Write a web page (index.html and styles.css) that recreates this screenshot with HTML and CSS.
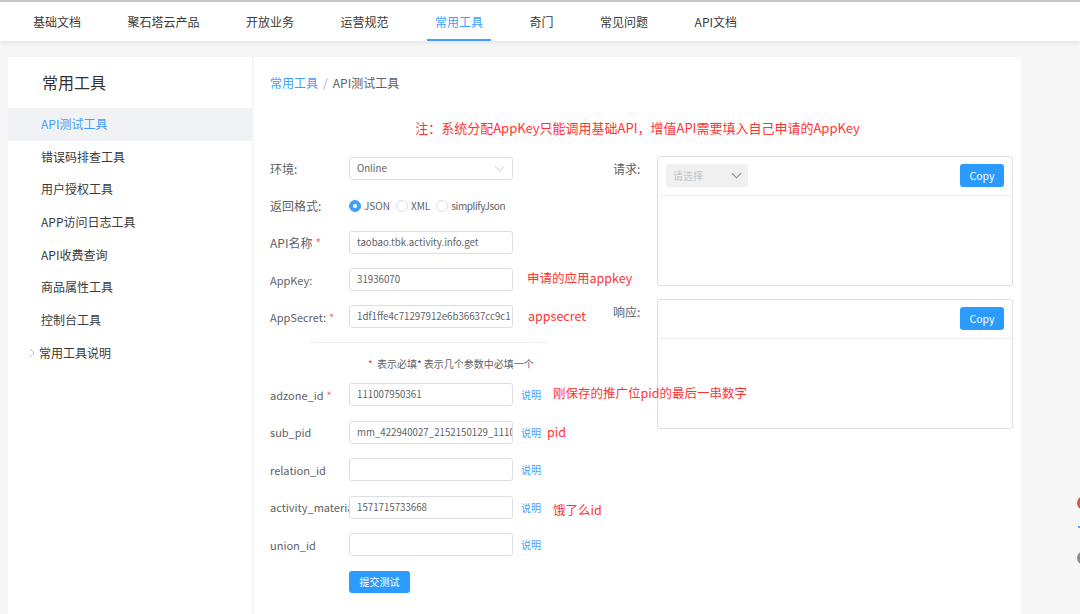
FILE: index.html
```html
<!DOCTYPE html>
<html lang="zh-CN">
<head>
<meta charset="utf-8">
<title>API测试工具</title>
<link rel="stylesheet" href="styles.css">
</head>
<body>
<nav class="topnav">
  <a href="#">基础文档</a>
  <a href="#">聚石塔云产品</a>
  <a href="#">开放业务</a>
  <a href="#">运营规范</a>
  <a href="#" class="active">常用工具</a>
  <a href="#">奇门</a>
  <a href="#">常见问题</a>
  <a href="#">API文档</a>
</nav>
<div class="page">
  <aside class="sidebar">
    <div class="side-title">常用工具</div>
    <ul class="side-menu">
      <li class="active">API测试工具</li>
      <li>错误码排查工具</li>
      <li>用户授权工具</li>
      <li>APP访问日志工具</li>
      <li>API收费查询</li>
      <li>商品属性工具</li>
      <li>控制台工具</li>
      <li class="sub"><svg class="sub-arrow" viewBox="0 0 6 10" width="6" height="10"><polyline points="1,1 5,5 1,9" fill="none" stroke="#b5b8be" stroke-width="1"/></svg>常用工具说明</li>
    </ul>
  </aside>
  <main class="main">
    <div class="crumb"><span class="crumb-link">常用工具</span><span class="crumb-sep">/</span><span class="crumb-cur">API测试工具</span></div>
    <p class="notice">注：系统分配AppKey只能调用基础API，增值API需要填入自己申请的AppKey</p>
    <div class="form-wrap">
      <div class="left-col">
        <div class="row">
          <label class="lbl">环境:</label>
          <div class="inp select">Online<svg class="chev" viewBox="0 0 12 7" width="11" height="7"><polyline points="1,1 6,6 11,1" fill="none" stroke="#c0c4cc" stroke-width="1"/></svg></div>
        </div>
        <div class="row">
          <label class="lbl">返回格式:</label>
          <div class="radios">
            <span class="radio checked"></span><span class="rtext">JSON</span>
            <span class="radio"></span><span class="rtext">XML</span>
            <span class="radio"></span><span class="rtext narrow">simplifyJson</span>
          </div>
        </div>
        <div class="row">
          <label class="lbl">API名称<span class="req">*</span></label>
          <div class="inp">taobao.tbk.activity.info.get</div>
        </div>
        <div class="row">
          <label class="lbl en">AppKey:</label>
          <div class="inp">31936070</div>
          <span class="anno a-appkey">申请的应用appkey</span>
        </div>
        <div class="row tight">
          <label class="lbl en">AppSecret:<span class="req">*</span></label>
          <div class="inp">1df1ffe4c71297912e6b36637cc9c1</div>
          <span class="anno a-secret">appsecret</span>
        </div>
        <div class="divider"></div>
        <p class="legend"><span class="req-red">*</span> 表示必填<span class="req-blue">*</span> 表示几个参数中必填一个</p>
        <div class="row low">
          <label class="lbl en">adzone_id<span class="req">*</span></label>
          <div class="inp">111007950361</div>
          <a class="help" href="#">说明</a>
          <span class="anno a-adzone">刚保存的推广位pid的最后一串数字</span>
        </div>
        <div class="row low">
          <label class="lbl en">sub_pid</label>
          <div class="inp">mm_422940027_2152150129_111007950361</div>
          <a class="help" href="#">说明</a>
          <span class="anno a-pid">pid</span>
        </div>
        <div class="row low">
          <label class="lbl en">relation_id</label>
          <div class="inp"></div>
          <a class="help" href="#">说明</a>
        </div>
        <div class="row low">
          <label class="lbl en">activity_material_id</label>
          <div class="inp">1571715733668</div>
          <a class="help" href="#">说明</a>
          <span class="anno a-ele">饿了么id</span>
        </div>
        <div class="row low">
          <label class="lbl en">union_id</label>
          <div class="inp"></div>
          <a class="help" href="#">说明</a>
        </div>
        <button class="submit">提交测试</button>
      </div>
      <div class="right-col">
        <div class="panel">
          <span class="plabel">请求:</span>
          <div class="pbox">
            <div class="phead">
              <div class="psel">请选择<svg class="chev2" viewBox="0 0 12 7" width="11" height="7"><polyline points="1,1 6,6 11,1" fill="none" stroke="#8a8d93" stroke-width="1.2"/></svg></div>
              <button class="copy">Copy</button>
            </div>
          </div>
        </div>
        <div class="panel">
          <span class="plabel">响应:</span>
          <div class="pbox">
            <div class="phead end">
              <button class="copy">Copy</button>
            </div>
          </div>
        </div>
      </div>
    </div>
  </main>
</div>
<div class="float-tools">
  <span class="ft ft-red"></span>
  <span class="ft ft-blue"></span>
  <span class="ft ft-gray"></span>
</div>
</body>
</html>
```
FILE: styles.css
```css
* { box-sizing: border-box; margin: 0; padding: 0; }
html, body { height: 100%; }
body {
  font-family: "Noto Sans CJK SC", "Noto Sans", sans-serif;
  background: #f6f6f6;
  border-top: 2px solid #c6c6c6;
  color: #333;
  overflow: hidden;
}
.topnav {
  height: 39px;
  background: #fff;
  display: flex;
  padding-left: 25px;
  gap: 30.5px;
  box-shadow: 0 2px 4px rgba(0,0,0,0.07);
  position: relative;
  z-index: 1;
}
.topnav a {
  display: flex;
  align-items: center;
  padding: 2px 8px 0;
  font-size: 12px;
  color: #3a3a3a;
  text-decoration: none;
  border-bottom: 2px solid transparent;
}
.topnav a.active { color: #409eff; border-bottom-color: #409eff; }

.page {
  display: flex;
  gap: 2px;
  padding: 16px 0 0 8px;
  height: calc(100% - 39px);
}
.sidebar { width: 244px; flex: none; background: #fff; }
.side-title {
  height: 51px;
  line-height: 51px;
  padding-left: 34px;
  font-size: 16px;
  color: #333;
}
.side-menu { list-style: none; }
.side-menu li {
  height: 32.7px;
  line-height: 32.7px;
  padding-left: 33px;
  font-size: 12px;
  color: #3a3a3a;
  display: flex;
  align-items: center;
}
.side-menu li.active { background: #f0f2f5; color: #409eff; }
.side-menu li.sub { padding-left: 21px; }
.sub-arrow { margin-right: 4px; }

.main { width: 767px; flex: none; background: #fff; padding: 16px 0 0 16px; }
.crumb { font-size: 12px; line-height: 20px; }
.crumb-link { color: #409eff; }
.crumb-sep { color: #b0b3b8; margin: 0 5px; }
.crumb-cur { color: #606266; }
.notice {
  margin: 25px 16px 18px 0;
  line-height: 20px;
  text-align: center;
  font-size: 13px;
  color: #f33;
}
.form-wrap { display: flex; }
.left-col { width: 343px; flex: none; padding-top: 1px; position: relative; }
.row {
  display: flex;
  align-items: center;
  height: 23px;
  margin-bottom: 14px;
  position: relative;
}
.row.tight { margin-bottom: 0; }
.row.low { margin-bottom: 14.5px; }
.lbl {
  width: 79px;
  flex: none;
  font-size: 12px;
  color: #606266;
  white-space: nowrap;
  overflow: hidden;
}
.lbl.en { font-size: 11px; }
.req { color: #f56c6c; margin-left: 3px; }
.inp {
  width: 164px;
  height: 23px;
  flex: none;
  border: 1px solid #dcdfe6;
  border-radius: 3px;
  padding: 0 6px 0 7px;
  font-size: 9.7px;
  line-height: 21px;
  color: #606266;
  white-space: nowrap;
  overflow: hidden;
  position: relative;
}
.select .chev { position: absolute; right: 7px; top: 7px; }
.radios { display: flex; align-items: center; }
.radio {
  width: 12px;
  height: 12px;
  border: 1px solid #dcdfe6;
  border-radius: 50%;
  margin-right: 3px;
  position: relative;
}
.radio.checked { background: #409eff; border-color: #409eff; }
.radio.checked::after {
  content: "";
  position: absolute;
  width: 4px;
  height: 4px;
  background: #fff;
  border-radius: 50%;
  left: 3px;
  top: 3px;
}
.rtext { font-size: 10px; color: #606266; margin-right: 6px; }
.rtext.narrow { letter-spacing: -0.4px; }
.help { margin-left: 8px; font-size: 10px; color: #409eff; text-decoration: none; }
.anno {
  position: absolute;
  font-size: 12.5px;
  color: #f33;
  white-space: nowrap;
  line-height: 23px;
  top: 0;
  z-index: 2;
}
.a-appkey { left: 257px; top: -2px; }
.a-secret { left: 258px; top: -1px; }
.a-adzone { left: 283px; top: -2px; }
.a-pid { left: 277px; top: -1px; }
.a-ele { left: 283px; top: 2px; }
.divider { margin: 14px 0 0 39px; width: 239px; height: 1px; background: #ebeef5; }
.legend {
  margin: 13px 0 11px 98px;
  font-size: 10px;
  line-height: 16px;
  color: #606266;
}
.req-red { color: #f33; margin-right: 2px; }
.req-blue { color: #2236ff; }
.submit {
  display: block;
  margin-left: 79px;
  width: 61px;
  height: 22px;
  border: none;
  border-radius: 3px;
  background: #2b9bff;
  color: #fff;
  font-family: inherit;
  font-size: 10px;
}
.right-col { display: flex; flex-direction: column; gap: 13px; }
.panel { display: flex; }
.plabel { width: 44px; font-size: 12px; line-height: 26px; color: #606266; }
.pbox {
  width: 356px;
  height: 130px;
  border: 1px solid #dcdfe6;
  border-radius: 3px;
}
.phead {
  height: 39px;
  border-bottom: 1px solid #ebeef5;
  padding: 7px 8px 0;
  display: flex;
  justify-content: space-between;
  align-items: flex-start;
}
.phead.end { justify-content: flex-end; }
.psel {
  width: 82px;
  height: 23px;
  background: #f0f0f0;
  border-radius: 3px;
  padding-left: 7px;
  font-size: 10px;
  line-height: 23px;
  color: #c0c4cc;
  position: relative;
}
.chev2 { position: absolute; right: 6px; top: 8px; }
.copy {
  width: 44px;
  height: 23px;
  border: none;
  border-radius: 3px;
  background: #2b9bff;
  color: #fff;
  font-family: inherit;
  font-size: 10.5px;
}
.float-tools {
  position: fixed;
  left: 1077px;
  top: 496px;
  display: flex;
  flex-direction: column;
}
.ft { display: block; border-radius: 50%; }
.ft-red { width: 14px; height: 14px; background: #d9534f; }
.ft-blue { width: 4px; height: 2px; background: #5aa7ff; margin: 16px 0 0 1px; border-radius: 0; }
.ft-gray { width: 14px; height: 14px; background: #8c8c8c; margin-top: 23px; }
```
